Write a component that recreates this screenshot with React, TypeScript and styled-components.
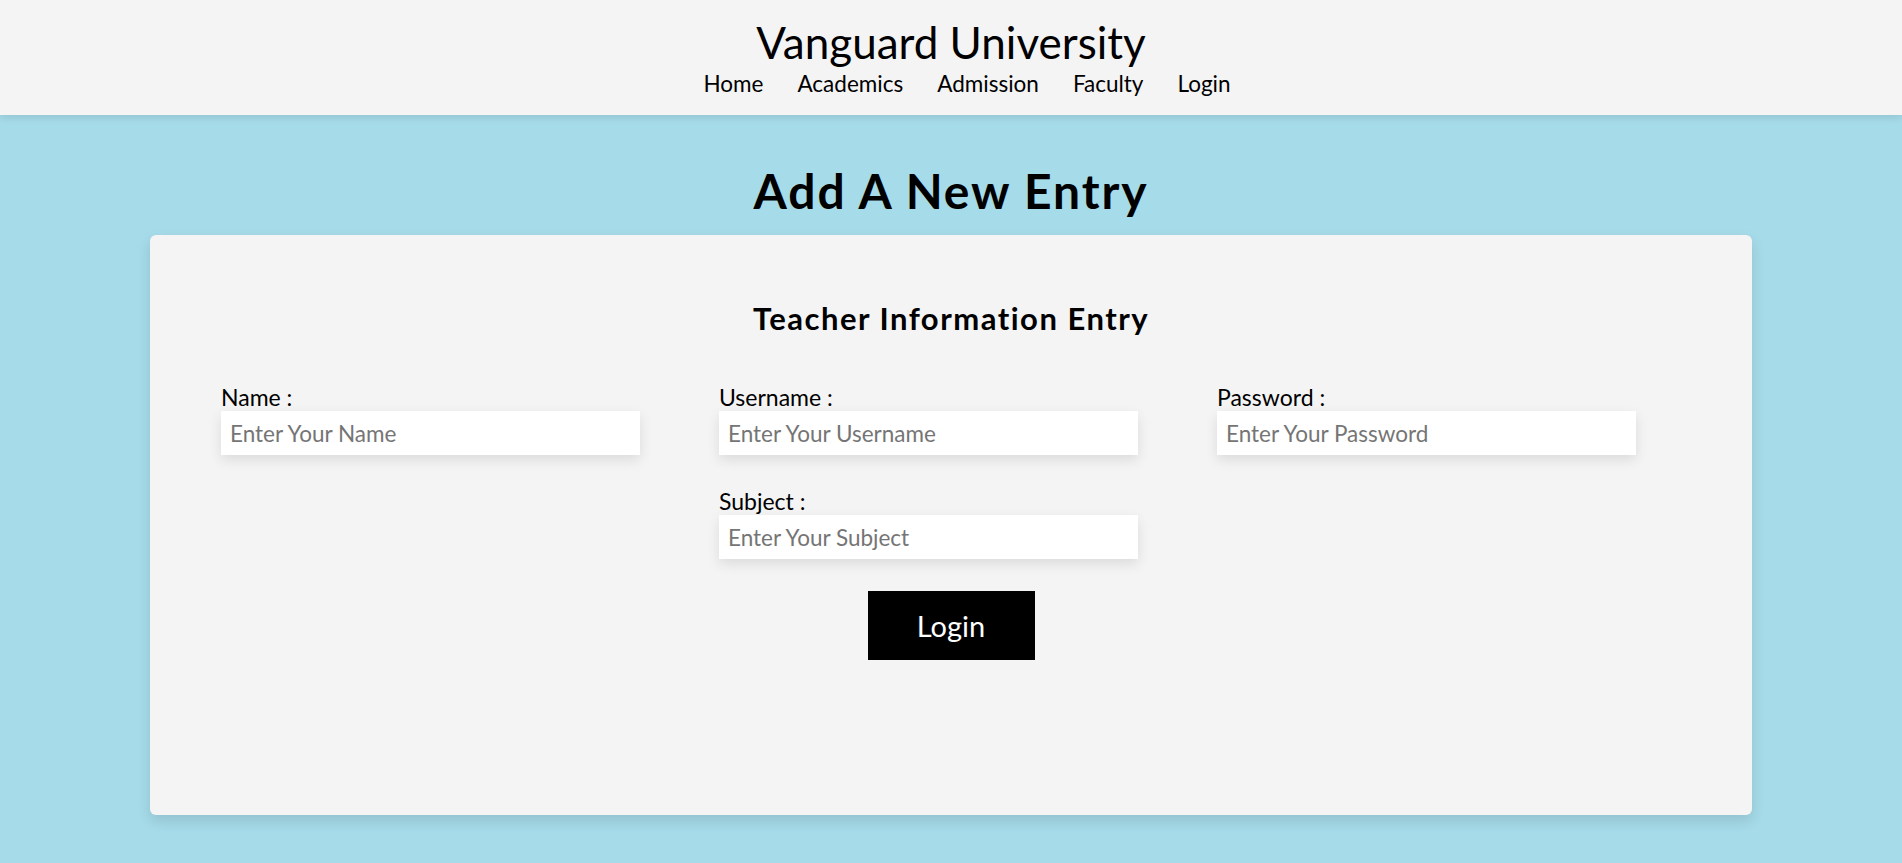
import React from "react";
import styled, { createGlobalStyle } from "styled-components";

const GlobalStyle = createGlobalStyle`
  * {
    box-sizing: border-box;
  }

  body {
    margin: 0;
    background: #a6dbe9;
    font-family: Lato, "Open Sans", sans-serif;
    color: #000;
  }
`;

interface Field {
  label: string;
  placeholder: string;
  type?: string;
  col: number;
}

const fields: Field[] = [
  { label: "Name :", placeholder: "Enter Your Name", col: 1 },
  { label: "Username :", placeholder: "Enter Your Username", col: 2 },
  { label: "Password :", placeholder: "Enter Your Password", type: "password", col: 3 },
  { label: "Subject :", placeholder: "Enter Your Subject", col: 2 },
];

const navLinks = ["Home", "Academics", "Admission", "Faculty", "Login"];

const App: React.FC = () => {
  return (
    <>
      <GlobalStyle />
      <Header>
        <SiteTitle>Vanguard University</SiteTitle>
        <Nav>
          {navLinks.map((link) => (
            <NavLink key={link} href="#">
              {link}
            </NavLink>
          ))}
        </Nav>
      </Header>

      <Main>
        <PageTitle>Add A New Entry</PageTitle>
        <Card>
          <CardTitle>Teacher Information Entry</CardTitle>
          <FieldGrid>
            {fields.map((f) => (
              <FieldGroup key={f.label} $col={f.col}>
                <Label>{f.label}</Label>
                <Input type={f.type ?? "text"} placeholder={f.placeholder} />
              </FieldGroup>
            ))}
          </FieldGrid>
          <SubmitButton type="button">Login</SubmitButton>
        </Card>
      </Main>
    </>
  );
};

export default App;

const Header = styled.header`
  height: 115px;
  background: #f4f4f4;
  box-shadow: 0 2px 8px rgba(0, 0, 0, 0.12);
  display: flex;
  flex-direction: column;
  align-items: center;
  padding-top: 16px;
`;

const SiteTitle = styled.h1`
  margin: 0;
  font-size: 44px;
  font-weight: 400;
  line-height: 52px;
`;

const Nav = styled.nav`
  display: flex;
  gap: 34px;
  margin-top: 2px;
  margin-left: 32px;
`;

const NavLink = styled.a`
  color: #000;
  text-decoration: none;
  font-size: 22.5px;
  line-height: 28px;
`;

const Main = styled.main`
  padding-top: 49px;
  padding-bottom: 48px;
`;

const PageTitle = styled.h2`
  margin: 0 0 17px;
  text-align: center;
  font-size: 48px;
  font-weight: 700;
  letter-spacing: 1.9px;
  line-height: 54px;
`;

const Card = styled.section`
  width: 1602px;
  height: 580px;
  margin: 0 auto;
  background: #f4f4f4;
  border-radius: 6px;
  box-shadow: 0 6px 14px rgba(0, 0, 0, 0.12);
  display: flex;
  flex-direction: column;
  align-items: center;
  padding-top: 64px;
`;

const CardTitle = styled.h3`
  margin: 0 0 46px;
  font-size: 31px;
  font-weight: 700;
  letter-spacing: 1.5px;
  line-height: 38px;
`;

const FieldGrid = styled.div`
  align-self: flex-start;
  margin-left: 71px;
  display: grid;
  grid-template-columns: repeat(3, 419px);
  column-gap: 79px;
  row-gap: 32px;
`;

const FieldGroup = styled.div<{ $col: number }>`
  grid-column: ${(p) => p.$col};
  display: flex;
  flex-direction: column;
`;

const Label = styled.label`
  font-size: 23px;
  line-height: 28px;
`;

const Input = styled.input`
  height: 44px;
  border: none;
  outline: none;
  background: #fff;
  padding: 0 9px;
  font-family: inherit;
  font-size: 22.5px;
  box-shadow: 0 5px 12px rgba(0, 0, 0, 0.1);

  &::placeholder {
    color: #757575;
  }
`;

const SubmitButton = styled.button`
  margin-top: 32px;
  width: 167px;
  height: 69px;
  border: none;
  background: #000;
  color: #fff;
  font-family: inherit;
  font-size: 29px;
  cursor: pointer;
`;
